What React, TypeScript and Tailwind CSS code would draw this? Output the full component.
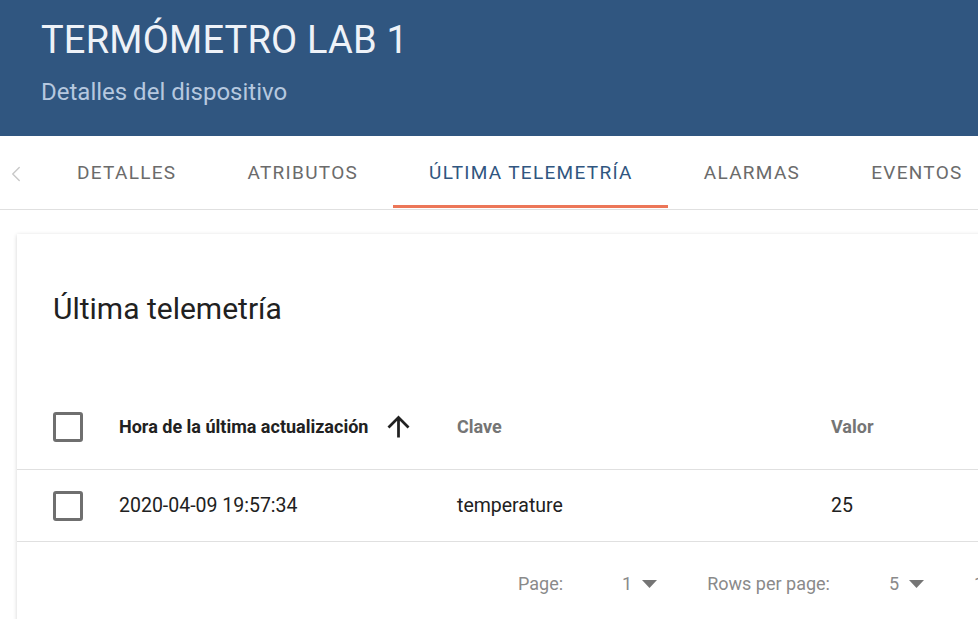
import { ChevronLeft } from 'lucide-react';

const tabs = ['DETALLES', 'ATRIBUTOS', 'ÚLTIMA TELEMETRÍA', 'ALARMAS', 'EVENTOS'];
const active = 2;

function Checkbox() {
  return <div className="w-[30px] h-[30px] shrink-0 rounded-[3px] border-[3px] border-[#6f6f6f]" />;
}

function Caret() {
  return (
    <svg width="15" height="8" viewBox="0 0 15 8" className="ml-[10px]">
      <path d="M0 0h15L7.5 8z" fill="#757575" />
    </svg>
  );
}

function SortArrow() {
  return (
    <svg width="33" height="33" viewBox="0 0 24 24" className="ml-[14px] shrink-0">
      <path d="M4 12l1.41 1.41L11 7.83V20h2V7.83l5.58 5.59L20 12l-8-8-8 8z" fill="#212121" />
    </svg>
  );
}

export default function App() {
  return (
    <div className="w-[978px] h-[619px] overflow-hidden bg-white font-['Roboto',sans-serif]">
      {/* header */}
      <div className="h-[136px] bg-[#305680] pl-[41px] pt-[17px]">
        <h1 className="text-[38px] leading-[46px] text-[#eef2f8] tracking-[0.2px]">TERMÓMETRO LAB 1</h1>
        <div className="mt-[15px] text-[24px] leading-[28px] text-[#b6c8df]">Detalles del dispositivo</div>
      </div>

      {/* tabs */}
      <div className="flex h-[74px] border-b border-[#e0e0e0] whitespace-nowrap">
        <div className="w-[41px] shrink-0 flex items-center justify-center pt-[2px]">
          <ChevronLeft size={26} strokeWidth={1.3} className="text-[#c8c8c8] -ml-[10px]" />
        </div>
        {tabs.map((t, i) => (
          <div
            key={t}
            className={
              'pl-[36px] pr-[35px] pt-[6px] flex items-center text-[19px] tracking-[1.3px] border-b-[3px] mb-[1px] ' +
              (i === active ? 'text-[#305680] border-[#ec7658]' : 'text-[#6b6b6b] border-transparent')
            }
          >
            {t}
          </div>
        ))}
      </div>

      {/* card */}
      <div className="mt-[24px] ml-[17px] w-[1100px] bg-white shadow-[0_1px_4px_rgba(0,0,0,0.18)]">
        <div className="h-[152px] pl-[36px] flex items-center">
          <h2 className="text-[30px] text-[#212121] -mt-[4px]">Última telemetría</h2>
        </div>

        <div className="flex items-center h-[84px] pb-[2px] border-b border-[#e0e0e0] pl-[36px] text-[18px] font-bold whitespace-nowrap">
          <Checkbox />
          <div className="w-[338px] ml-[36px] flex items-center text-[#212121]">
            Hora de la última actualización
            <SortArrow />
          </div>
          <div className="w-[374px] text-[#757575]">Clave</div>
          <div className="text-[#757575]">Valor</div>
        </div>

        <div className="flex items-center h-[72px] border-b border-[#e0e0e0] pl-[36px] text-[19.5px] text-[#212121] whitespace-nowrap">
          <Checkbox />
          <div className="w-[338px] ml-[36px]">2020-04-09 19:57:34</div>
          <div className="w-[374px]">temperature</div>
          <div>25</div>
        </div>

        <div className="flex items-center h-[82px] pt-[1px] pl-[501px] text-[18px] text-[#8a8a8a] whitespace-nowrap">
          <span>Page:</span>
          <span className="ml-[59px]">1</span>
          <Caret />
          <span className="ml-[50px]">Rows per page:</span>
          <span className="ml-[59px]">5</span>
          <Caret />
          <span className="ml-[50px]">1-1 of 1</span>
        </div>
      </div>
    </div>
  );
}
